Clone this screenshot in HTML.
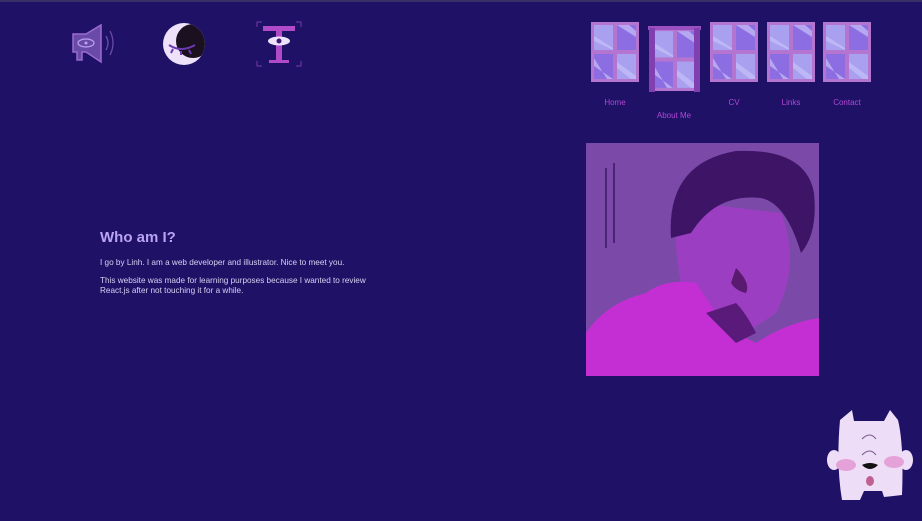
<!DOCTYPE html>
<html><head><style>
*{margin:0;padding:0;box-sizing:border-box}
body{width:922px;height:521px;background:#1f1166;font-family:"Liberation Sans",sans-serif;position:relative;overflow:hidden}
.a{position:absolute}
.lbl{position:absolute;font-size:8px;color:#b347d6;text-align:center;width:60px}
h1{position:absolute;left:100px;top:229px;font-size:15px;color:#b9a4f4;font-weight:bold}
p{position:absolute;left:100px;font-size:8.2px;color:#d8d0f2;line-height:9.5px;width:282px}
</style></head><body>
<div style="position:absolute;left:0;top:0;width:922px;height:2px;background:#3a2e66"></div>
<svg class="a" style="left:68px;top:22px" width="50" height="42" viewBox="0 0 50 42">
<path d="M5 12 L18 12 L33 3 L33 40 L18 30 L14 30 L14 38 L9 38 L9 30 L5 30 Z" fill="#6a4aa8" stroke="#9a6ad0" stroke-width="1.5"/>
<ellipse cx="18" cy="21" rx="8" ry="4" fill="none" stroke="#c0a0f0" stroke-width="1.2"/>
<circle cx="18" cy="21" r="1.5" fill="#c0a0f0"/>
<path d="M38 14 Q42 21 38 28 M42 9 Q48 21 42 33" fill="none" stroke="#6a4aa8" stroke-width="1.3"/>
</svg>
<svg class="a" style="left:161px;top:21px" width="46" height="46" viewBox="0 0 46 46">
<defs><clipPath id="mc"><circle cx="23" cy="23" r="21"/></clipPath></defs>
<circle cx="23" cy="23" r="21" fill="#eee2fb"/>
<circle cx="32" cy="20" r="17" fill="#1a1020" clip-path="url(#mc)"/>
<path d="M8 24 Q20 32 34 24 M12 28 L10 32 M20 30 L20 34 M28 29 L30 33" stroke="#6a3ab0" stroke-width="2" fill="none"/>
</svg>
<svg class="a" style="left:255px;top:20px" width="48" height="48" viewBox="0 0 48 48">
<path d="M2 7V2H7M41 2H46V7M2 41V46H7M41 46H46V41" stroke="#7a3aa8" fill="none"/>
<rect x="8" y="6" width="32" height="5" fill="#b04ac8"/>
<rect x="21" y="6" width="6" height="36" fill="#b04ac8"/>
<rect x="14" y="40" width="20" height="3" fill="#b04ac8"/>
<ellipse cx="24" cy="21" rx="11" ry="4.5" fill="#eee2fb"/>
<circle cx="24" cy="21" r="2.5" fill="#3a1a70"/>
</svg>
<svg class="a" style="left:585px;top:18px" width="295" height="80" viewBox="585 18 295 80">
<defs><g id="w"><rect x="0" y="0" width="48" height="60" fill="#b375cf"/>
<rect x="3" y="3" width="19" height="25" fill="#a9a0f0"/><rect x="26" y="3" width="19" height="25" fill="#8d6ee2"/>
<rect x="3" y="32" width="19" height="25" fill="#8d6ee2"/><rect x="26" y="32" width="19" height="25" fill="#a9a0f0"/>
<path d="M3 14 L22 26 L22 28 L3 19Z M26 3 L38 3 L45 9 L45 15Z M3 36 L16 57 L22 57 L3 44Z M26 40 L45 54 L45 57 L40 57 L26 46Z" fill="#c6c0f8" opacity=".7"/></g></defs>
<use href="#w" x="591" y="22"/>
<g transform="translate(651,28) scale(1,1.05)"><use href="#w" x="0" y="0"/></g>
<rect x="648" y="26" width="53" height="4" fill="#9a50c0"/>
<rect x="649" y="28" width="6" height="64" fill="#8040b0"/><rect x="694" y="28" width="6" height="64" fill="#8040b0"/>
<use href="#w" x="710" y="22"/><use href="#w" x="767" y="22"/><use href="#w" x="823" y="22"/>
</svg>
<div class="lbl" style="left:585px;top:98px">Home</div>
<div class="lbl" style="left:644px;top:111px">About Me</div>
<div class="lbl" style="left:704px;top:98px">CV</div>
<div class="lbl" style="left:761px;top:98px">Links</div>
<div class="lbl" style="left:817px;top:98px">Contact</div>
<h1>Who am I?</h1>
<p style="top:258px">I go by Linh. I am a web developer and illustrator. Nice to meet you.</p>
<p style="top:276px">This website was made for learning purposes because I wanted to review React.js after not touching it for a while.</p>
<svg class="a" style="left:586px;top:143px" width="233" height="233" viewBox="0 0 233 233">
<rect width="233" height="233" fill="#7b4aa9"/>
<path d="M20 25 V105 M28 20 V100" stroke="#3a1a60" stroke-width="1.5"/>
<path d="M95 140 Q80 60 110 60 L195 70 Q215 120 190 170 L160 190 Q120 190 95 140Z" fill="#9c3ec2"/>
<path d="M85 95 Q80 20 150 8 Q220 5 228 50 Q232 90 215 110 Q200 60 175 55 Q130 50 105 90Z" fill="#3d1466"/>
<path d="M0 233 L0 190 Q20 160 60 150 Q80 135 110 140 L140 185 L170 200 Q200 180 233 175 L233 233Z" fill="#c42fd4"/>
<path d="M120 170 L150 200 L170 190 Q160 170 150 160Z" fill="#5a1a7a"/>
<path d="M150 125 Q165 140 160 150 Q150 148 145 140Z" fill="#5a1a70"/>
</svg>
<svg class="a" style="left:824px;top:405px" width="90" height="100" viewBox="0 0 90 100">
<path d="M16 15 L28 5 L30 16 L60 16 L66 5 L74 15 Q80 40 78 90 L60 92 L58 86 L40 86 L36 95 L18 95 Q12 60 16 15Z" fill="#eeddf6"/>
<ellipse cx="10" cy="55" rx="7" ry="10" fill="#eeddf6"/><ellipse cx="82" cy="55" rx="7" ry="10" fill="#eeddf6"/>
<ellipse cx="22" cy="60" rx="10" ry="6" fill="#e4a2d8"/><ellipse cx="70" cy="57" rx="10" ry="6" fill="#e4a2d8"/>
<path d="M38 34 Q46 26 52 34 M38 50 Q46 42 52 50" stroke="#7a5a90" fill="none"/>
<path d="M38 60 Q46 56 54 60 Q46 68 38 60Z" fill="#111"/>
<ellipse cx="46" cy="76" rx="4" ry="5" fill="#c06090"/>
</svg>
</body></html>
